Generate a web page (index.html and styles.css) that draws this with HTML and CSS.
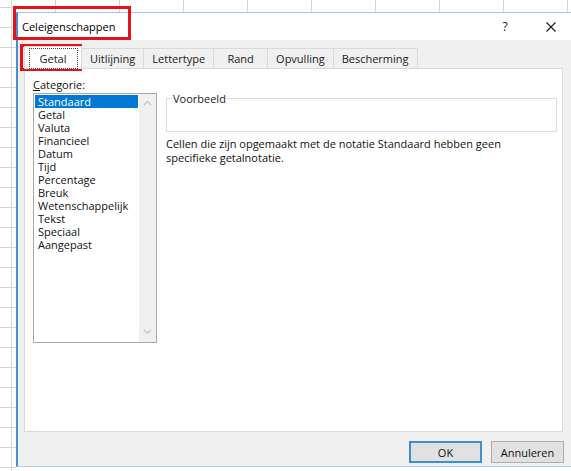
FILE: index.html
```html
<!DOCTYPE html>
<html lang="nl">
<head>
<meta charset="utf-8">
<title>Celeigenschappen</title>
<link rel="stylesheet" href="styles.css">
</head>
<body>
<div class="desk">
  <div class="dialog">
    <div class="titlebar">
      <span class="title">Celeigenschappen</span>
      <span class="caption-btn help">?</span>
      <span class="caption-btn close">
        <svg width="10" height="10" viewBox="0 0 10 10"><path d="M0.5 0.5L9.5 9.5M9.5 0.5L0.5 9.5" stroke="#1a1a1a" stroke-width="1.1" fill="none"/></svg>
      </span>
    </div>
    <div class="dlg-body">
      <div class="tabs">
        <div class="tab active"><span class="focus">Getal</span></div>
        <div class="tab">Uitlijning</div>
        <div class="tab">Lettertype</div>
        <div class="tab">Rand</div>
        <div class="tab">Opvulling</div>
        <div class="tab">Bescherming</div>
      </div>
      <div class="panel">
        <div class="cat-col">
          <div class="label"><u>C</u>ategorie:</div>
          <div class="listbox">
            <ul class="items">
              <li class="selected">Standaard</li>
              <li>Getal</li>
              <li>Valuta</li>
              <li>Financieel</li>
              <li>Datum</li>
              <li>Tijd</li>
              <li>Percentage</li>
              <li>Breuk</li>
              <li>Wetenschappelijk</li>
              <li>Tekst</li>
              <li>Speciaal</li>
              <li>Aangepast</li>
            </ul>
            <div class="vscroll">
              <svg width="9" height="6" viewBox="0 0 9 6"><path d="M1 5L4.5 1.5L8 5" stroke="#c2c2c2" stroke-width="1.2" fill="none"/></svg>
              <svg width="9" height="6" viewBox="0 0 9 6"><path d="M1 1L4.5 4.5L8 1" stroke="#c2c2c2" stroke-width="1.2" fill="none"/></svg>
            </div>
          </div>
        </div>
        <div class="info-col">
          <fieldset class="sample">
            <legend>Voorbeeld</legend>
            <div class="sample-value"></div>
          </fieldset>
          <p class="desc">Cellen die zijn opgemaakt met de notatie Standaard hebben geen<br>specifieke getalnotatie.</p>
        </div>
      </div>
      <div class="actions">
        <button class="btn default">OK</button>
        <button class="btn">Annuleren</button>
      </div>
    </div>
  </div>
  <div class="mark mark-title"></div>
  <div class="mark mark-tab"></div>
</div>
</body>
</html>
```
FILE: styles.css
```css
html, body {
  margin: 0;
  padding: 0;
}

body {
  font-family: "Open Sans", "Noto Sans", sans-serif;
  font-size: 11px;
  color: #111;
}

/* spreadsheet behind the dialog: column ticks on top, row ticks on the left */
.desk {
  position: relative;
  width: 571px;
  height: 471px;
  overflow: hidden;
  box-sizing: border-box;
  padding: 12px 0 0 16px;
  background-color: #fff;
  background-image:
    linear-gradient(to right, #d4d4d4 1px, transparent 1px),
    linear-gradient(to bottom, #d4d4d4 1px, transparent 1px),
    linear-gradient(#dadada, #dadada);
  background-size: 64px 12px, 16px 20px, 1px 100%;
  background-position: 55px 0, 0 7px, 11px 0;
  background-repeat: repeat-x, repeat-y, no-repeat;
}

.dialog {
  width: 558px;
  box-sizing: border-box;
  border-left: 2px solid #4a8fd3;
  border-top: 1px solid #9fc3e4;
  border-bottom: 1px solid #a9cdec;
  background: #f0f0f0;
}

.titlebar {
  height: 27px;
  display: flex;
  align-items: center;
  background: #fff;
}

.title {
  flex: 1;
  padding-left: 4px;
  font-size: 11px;
  color: #000;
}

.caption-btn {
  width: 46px;
  height: 27px;
  display: flex;
  align-items: center;
  justify-content: center;
  color: #222;
}

.help {
  font-size: 12px;
}

.dlg-body {
  height: 426px;
  padding-top: 8px;
  box-sizing: border-box;
  display: flex;
  flex-direction: column;
}

/* tab strip */
.tabs {
  display: flex;
  align-items: flex-end;
  margin-left: 6px;
  height: 20px;
  position: relative;
  z-index: 1;
}

.tab {
  height: 20px;
  min-width: 54px;
  box-sizing: border-box;
  padding: 0 8px;
  display: flex;
  align-items: center;
  justify-content: center;
  border: 1px solid #d9d9d9;
  border-left: none;
  border-bottom: none;
  background: #f0f0f0;
  color: #1a1a1a;
}

.tab.active {
  height: 23px;
  width: 58px;
  margin-bottom: -1px;
  border-left: 1px solid #d9d9d9;
  background: #fff;
}

.focus {
  padding: 2px 10px;
  outline: 1px dotted #444;
  outline-offset: 0;
}

/* tab page */
.panel {
  margin: 0 11px 0 6px;
  height: 364px;
  box-sizing: border-box;
  border: 1px solid #d9d9d9;
  background: #fff;
  padding: 9px 5px 0 8px;
  display: grid;
  grid-template-columns: 124px 1fr;
  column-gap: 9px;
  align-items: start;
}

.label {
  line-height: 13px;
  margin-bottom: 2px;
}

.listbox {
  height: 250px;
  box-sizing: border-box;
  border: 1px solid #a9a9a9;
  display: flex;
}

.items {
  list-style: none;
  margin: 0;
  padding: 1px;
  flex: 1;
}

.items li {
  line-height: 13px;
  height: 13px;
  padding-left: 3px;
  white-space: nowrap;
}

.items li.selected {
  background: #0078d7;
  color: #fff;
}

.vscroll {
  width: 17px;
  background: #f0f0f0;
  display: flex;
  flex-direction: column;
  justify-content: space-between;
  align-items: center;
  padding: 6px 0 7px;
  box-sizing: border-box;
}

.info-col {
  padding-top: 14px;
}

.sample {
  margin: 0;
  padding: 0;
  border: 1px solid #dcdcdc;
  min-width: 0;
}

.sample legend {
  margin-left: 5px;
  padding: 0 1px;
  line-height: 13px;
  color: #222;
}

.sample-value {
  height: 26px;
}

.desc {
  margin: 5px 0 0;
  line-height: 14px;
}

/* dialog buttons */
.actions {
  display: flex;
  justify-content: flex-end;
  gap: 9px;
  padding: 9px 10px 0 0;
}

.btn {
  width: 73px;
  height: 22px;
  box-sizing: border-box;
  border: 1px solid #adadad;
  background: #e1e1e1;
  font: inherit;
  color: #111;
  padding: 0;
}

.btn.default {
  border: 2px solid #3d8ed6;
}

/* red highlight annotations */
.mark {
  position: absolute;
  border: 3px solid #e3131b;
  box-sizing: border-box;
}

.mark-title {
  left: 13px;
  top: 6px;
  width: 118px;
  height: 34px;
}

.mark-tab {
  left: 20px;
  top: 44px;
  width: 62px;
  height: 27px;
}
```
